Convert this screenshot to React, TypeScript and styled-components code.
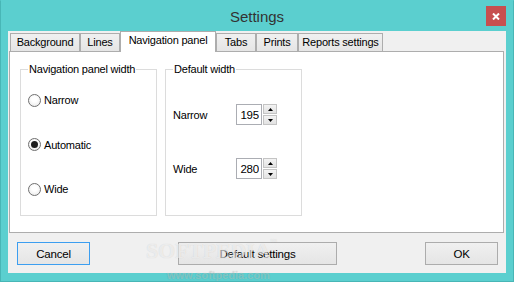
import React from 'react'
import styled, { createGlobalStyle, css } from 'styled-components'

const tabs = [
  { label: 'Background', w: 70 },
  { label: 'Lines', w: 40 },
  { label: 'Navigation panel', w: 96, active: true },
  { label: 'Tabs', w: 40 },
  { label: 'Prints', w: 42 },
  { label: 'Reports settings', w: 85 }
]

const widths = [
  { label: 'Narrow', value: 195 },
  { label: 'Wide', value: 280 }
]

const Arrow = ({ down }: { down?: boolean }) => (
  <svg width="5" height="3" viewBox="0 0 5 3">
    <path d={down ? 'M0 0h5L2.5 3z' : 'M0 3h5L2.5 0z'} fill="#000" />
  </svg>
)

export default () => (
  <>
    <GlobalStyle />
    <Window>
      <TitleBar>
        <span />
        <Title>Settings</Title>
        <CloseButton>
          <svg width="8" height="7" viewBox="0 0 8 7">
            <path d="M1 0.5l6 6M7 0.5l-6 6" stroke="#fff" strokeWidth="2" />
          </svg>
        </CloseButton>
      </TitleBar>
      <Client>
        <TabStrip>
          {tabs.map(t => (
            <Tab key={t.label} $w={t.w} $active={t.active}>
              {t.label}
            </Tab>
          ))}
        </TabStrip>
        <Panel>
          <GroupBox>
            <Legend>Navigation panel width</Legend>
            <RadioList>
              <RadioRow>
                <Radio />
                Narrow
              </RadioRow>
              <RadioRow>
                <Radio $checked />
                Automatic
              </RadioRow>
              <RadioRow>
                <Radio />
                Wide
              </RadioRow>
            </RadioList>
          </GroupBox>
          <GroupBox>
            <Legend>Default width</Legend>
            <FieldList>
              {widths.map(f => (
                <FieldRow key={f.label}>
                  <FieldLabel>{f.label}</FieldLabel>
                  <NumberBox readOnly value={f.value} />
                  <Spin>
                    <SpinButton>
                      <Arrow />
                    </SpinButton>
                    <SpinButton>
                      <Arrow down />
                    </SpinButton>
                  </Spin>
                </FieldRow>
              ))}
            </FieldList>
          </GroupBox>
        </Panel>
        <Footer>
          <Button $w={73} $focused>
            Cancel
          </Button>
          <Button $w={159}>Default settings</Button>
          <Button $w={73}>OK</Button>
        </Footer>
      </Client>
      <Watermark>
        SOFTPEDIA<sup>™</sup>
      </Watermark>
      <WatermarkUrl>www.softpedia.com</WatermarkUrl>
    </Window>
  </>
)

const GlobalStyle = createGlobalStyle`
  html, body {
    margin: 0;
    padding: 0;
    background: #fff;
  }
  body {
    font-family: 'Liberation Sans', Arial, sans-serif;
    font-size: 11px;
    letter-spacing: -0.2px;
    color: #000;
  }
`

const Window = styled.div`
  position: relative;
  box-sizing: border-box;
  width: 514px;
  height: 282px;
  background: #5bcfcf;
  border: 1px solid #48b6b6;
  border-top-color: #5bcfcf;
  padding: 0 7px 8px;
  display: flex;
  flex-direction: column;
  overflow: hidden;
`

const TitleBar = styled.div`
  height: 30px;
  display: grid;
  grid-template-columns: 1fr auto 1fr;
  align-items: center;
`

const Title = styled.div`
  font-size: 15px;
  letter-spacing: 0;
  color: #333;
  padding-top: 1px;
`

const CloseButton = styled.div`
  justify-self: end;
  align-self: start;
  margin-top: 5px;
  width: 20px;
  height: 20px;
  background: #c75050;
  display: flex;
  align-items: center;
  justify-content: center;
`

const Client = styled.div`
  flex: 1;
  background: #f0f0f0;
  display: flex;
  flex-direction: column;
`

const TabStrip = styled.div`
  height: 20px;
  display: flex;
  align-items: flex-end;
  padding-left: 2px;
`

const Tab = styled.div<{ $w: number; $active?: boolean }>`
  box-sizing: border-box;
  width: ${p => p.$w}px;
  height: 18px;
  border: 1px solid #adadad;
  border-bottom: none;
  background: linear-gradient(#f0f0f0, #e5e5e5);
  text-align: center;
  line-height: 17px;
  white-space: nowrap;

  ${p =>
    p.$active &&
    css`
      position: relative;
      z-index: 1;
      height: 21px;
      margin-bottom: -1px;
      background: #fff;
      line-height: 16px;
    `}
`

const Panel = styled.div`
  box-sizing: border-box;
  height: 182px;
  margin: 0 2px 0 1px;
  border: 1px solid #adadad;
  background: #fff;
  padding: 11px 0 0 10px;
  display: flex;
  gap: 8px;
`

const GroupBox = styled.fieldset`
  box-sizing: border-box;
  width: 137px;
  height: 153px;
  margin: 0;
  padding: 0 7px;
  min-width: 0;
  border: 1px solid #dcdcdc;
`

const Legend = styled.legend`
  padding: 0 1px;
  line-height: 12px;
  font-size: 11px;
`

const RadioList = styled.div`
  padding-top: 15px;
  display: flex;
  flex-direction: column;
  gap: 24.5px;
`

const RadioRow = styled.div`
  height: 20px;
  display: flex;
  align-items: center;
  gap: 3px;
`

const Radio = styled.span<{ $checked?: boolean }>`
  box-sizing: border-box;
  width: 13px;
  height: 13px;
  border-radius: 50%;
  border: 1px solid #707070;
  background: radial-gradient(circle at 50% 40%, #fff 30%, #e4e4e4 100%);
  display: flex;
  align-items: center;
  justify-content: center;

  &::after {
    content: '';
    width: 7px;
    height: 7px;
    border-radius: 50%;
    background: #1c1c1c;
    display: ${p => (p.$checked ? 'block' : 'none')};
  }
`

const FieldList = styled.div`
  padding-top: 29px;
  display: flex;
  flex-direction: column;
  gap: 33px;
`

const FieldRow = styled.div`
  height: 21px;
  display: flex;
  align-items: center;
`

const FieldLabel = styled.span`
  width: 63px;
`

const NumberBox = styled.input`
  box-sizing: border-box;
  width: 26px;
  height: 21px;
  margin: 0;
  padding: 0 2px 0 0;
  border: 1px solid #abadb3;
  font-family: 'Liberation Sans', Arial, sans-serif;
  font-size: 11.5px;
  letter-spacing: -0.2px;
  text-align: right;
  outline: none;
  color: #000;
`

const Spin = styled.div`
  margin-left: 1px;
  display: flex;
  flex-direction: column;
  gap: 1px;
`

const SpinButton = styled.div`
  box-sizing: border-box;
  width: 14px;
  height: 10px;
  border: 1px solid #c4c4c4;
  background: linear-gradient(#f3f3f3, #e2e2e2);
  display: flex;
  align-items: center;
  justify-content: center;
`

const Footer = styled.div`
  display: flex;
  justify-content: space-between;
  align-items: center;
  padding: 9px 8px 8px 9px;
`

const Button = styled.button<{ $w: number; $focused?: boolean }>`
  box-sizing: border-box;
  width: ${p => p.$w}px;
  height: 23px;
  margin: 0;
  padding: 0;
  border: 1px solid ${p => (p.$focused ? '#3c9ef0' : '#acacac')};
  background: linear-gradient(#f0f0f0, #e5e5e5);
  font-family: 'Liberation Sans', Arial, sans-serif;
  font-size: 11.5px;
  letter-spacing: -0.2px;
  color: #000;
`

const Watermark = styled.div`
  position: absolute;
  left: 145px;
  top: 237px;
  font-family: 'Liberation Serif', 'Times New Roman', serif;
  font-weight: bold;
  font-size: 22px;
  color: rgba(255, 255, 255, 0.6);
  text-shadow: 0 0 1px rgba(0, 0, 0, 0.15);
  pointer-events: none;

  sup {
    font-size: 7px;
    vertical-align: top;
  }
`

const WatermarkUrl = styled.div`
  position: absolute;
  left: 166px;
  top: 268px;
  font-family: 'Liberation Sans', Arial, sans-serif;
  font-weight: bold;
  font-size: 11px;
  letter-spacing: 0;
  color: rgba(255, 255, 255, 0.3);
  text-shadow: 0 0 1px rgba(0, 0, 0, 0.2);
  pointer-events: none;
`
